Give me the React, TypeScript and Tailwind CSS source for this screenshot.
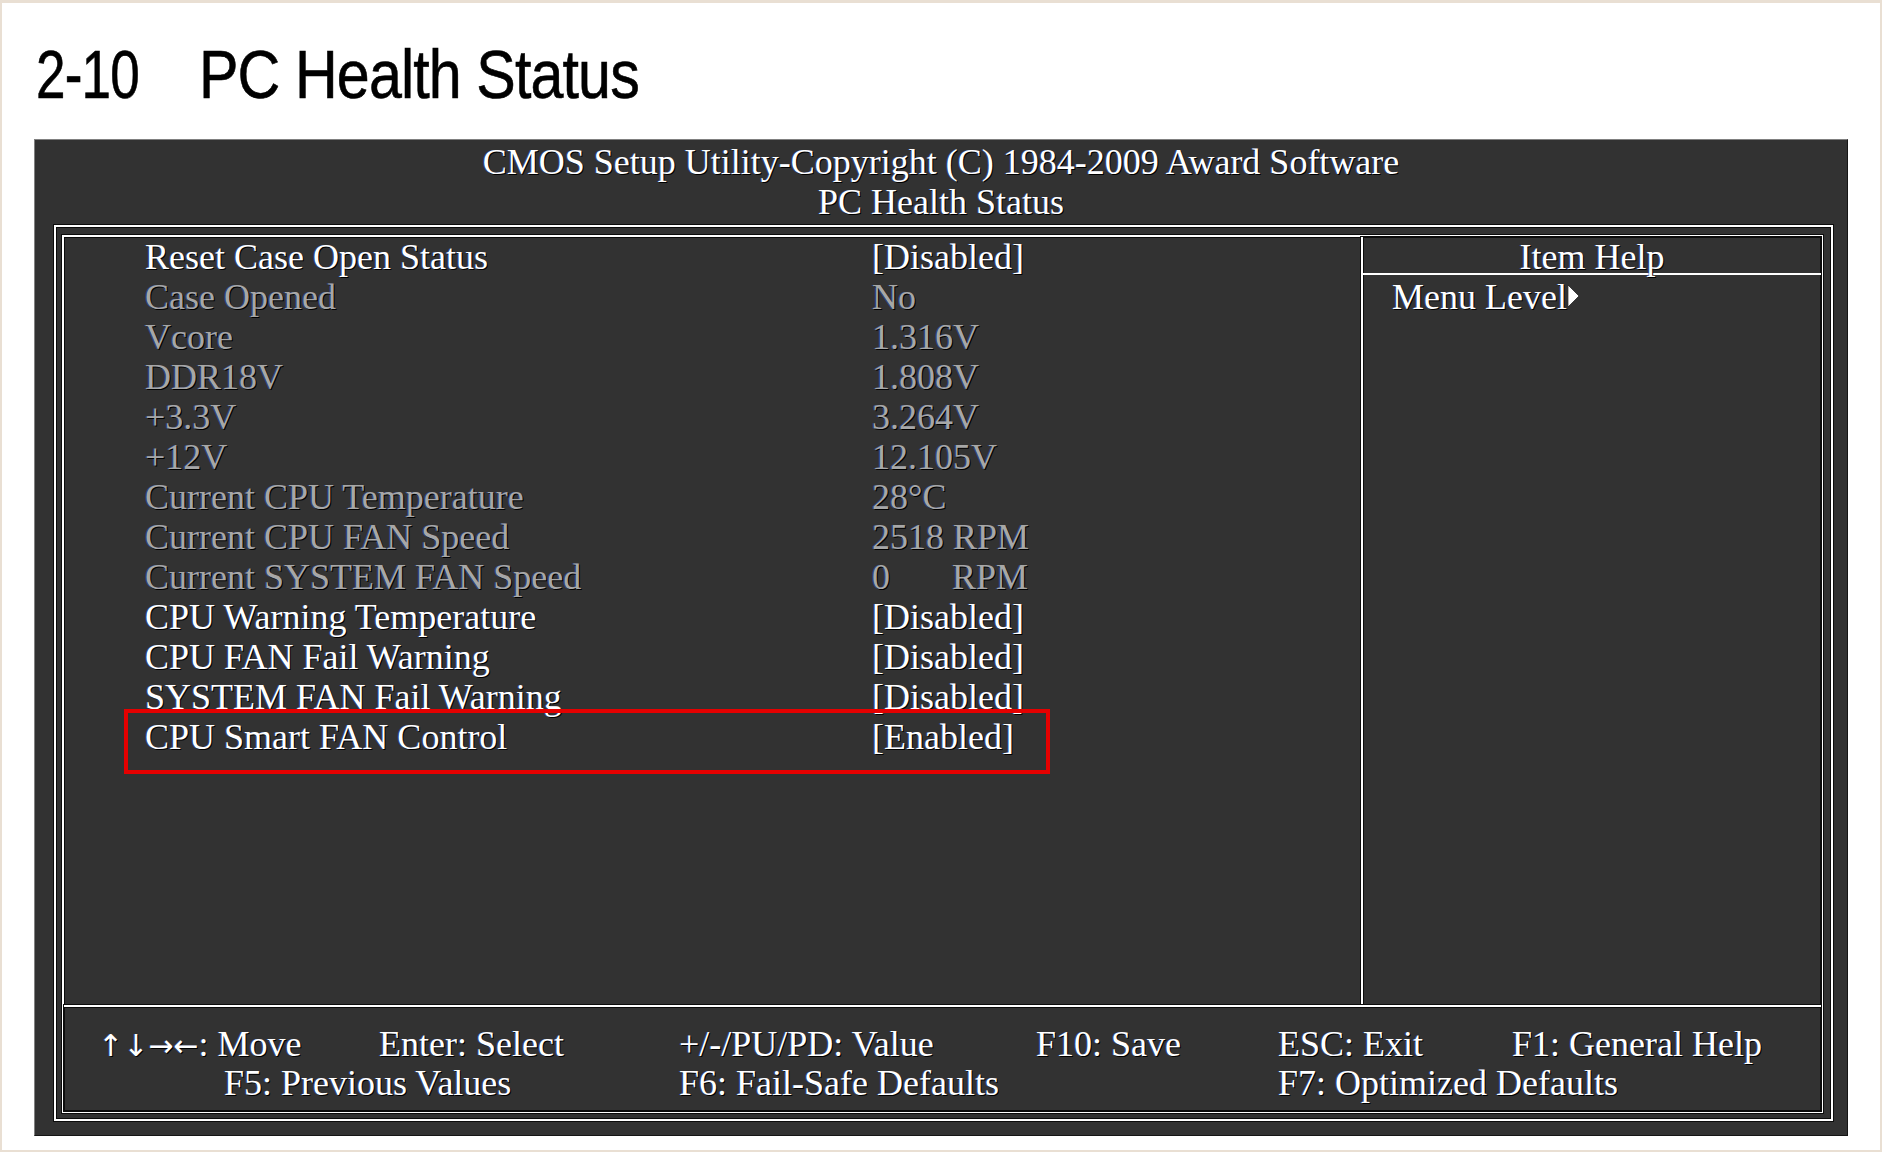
import React from "react";

const serif = "font-['Liberation_Serif','Times_New_Roman',serif]";
const sh = "[text-shadow:1px_1px_0_#000,-1px_0_0_rgba(40,80,200,0.55)]";

type Row = { label: string; value: React.ReactNode; active: boolean };

const rows: Row[] = [
  { label: "Reset Case Open Status", value: "[Disabled]", active: true },
  { label: "Case Opened", value: "No", active: false },
  { label: "Vcore", value: "1.316V", active: false },
  { label: "DDR18V", value: "1.808V", active: false },
  { label: "+3.3V", value: "3.264V", active: false },
  { label: "+12V", value: "12.105V", active: false },
  { label: "Current CPU Temperature", value: "28°C", active: false },
  { label: "Current CPU FAN Speed", value: "2518 RPM", active: false },
  {
    label: "Current SYSTEM FAN Speed",
    value: (
      <>
        <span className="inline-block w-[80px]">0</span>RPM
      </>
    ),
    active: false,
  },
  { label: "CPU Warning Temperature", value: "[Disabled]", active: true },
  { label: "CPU FAN Fail Warning", value: "[Disabled]", active: true },
  { label: "SYSTEM FAN Fail Warning", value: "[Disabled]", active: true },
  { label: "CPU Smart FAN Control", value: "[Enabled]", active: true },
];

const lineShadow = "shadow-[0_0_0_1px_#0c0c0c,inset_0_0_0_1px_#0c0c0c]";

export default function App() {
  return (
    <div className="w-[1882px] h-[1152px] bg-[#e9dfd3] pt-[3px] pl-[2px] pr-[2px] pb-[2px]">
      <div className="w-full h-full bg-white flex flex-col">
        {/* Title */}
        <div className="mt-[38px] ml-[34px] h-[67px] flex items-start font-['Liberation_Sans',Arial,sans-serif] text-[68px] leading-[67px] text-black [-webkit-text-stroke:0.6px_#000]">
          <div className="w-[163px] shrink-0">
            <span className="inline-block origin-left scale-x-[0.78] tracking-[-1px]">2-10</span>
          </div>
          <span className="inline-block origin-left scale-x-[0.87] tracking-[-1px] whitespace-nowrap">
            PC Health Status
          </span>
        </div>

        {/* BIOS panel */}
        <div
          className={`mt-[31px] ml-[32px] w-[1814px] h-[997px] bg-[#323232] border border-t-[#808080] border-l-[#808080] border-r-[#151515] border-b-[#151515] flex flex-col ${serif} text-white`}
        >
          <div className={`h-[85px] pt-[2px] flex flex-col items-center text-[36px] leading-[40px] ${sh}`}>
            <div>CMOS Setup Utility-Copyright (C) 1984-2009 Award Software</div>
            <div>PC Health Status</div>
          </div>

          {/* outer frame */}
          <div className={`ml-[19px] w-[1779px] h-[896px] border-2 border-white ${lineShadow} pt-[8px] pl-[6px] pr-[8px] pb-[6px]`}>
            {/* inner frame */}
            <div className={`w-full h-full border-2 border-white ${lineShadow} flex flex-col`}>
              {/* main */}
              <div className="h-[768px] flex">
                <div className="relative w-[1297px] shrink-0 pl-[81px] text-[36px] leading-[40px]">
                  {rows.map((r) => (
                    <div
                      key={r.label}
                      className={`h-[40px] flex whitespace-nowrap ${sh} ${r.active ? "text-white" : "text-[#a7a7a7]"}`}
                    >
                      <div className="w-[727px] shrink-0">{r.label}</div>
                      <div>{r.value}</div>
                    </div>
                  ))}
                  <div className="absolute left-[60px] top-[472px] w-[926px] h-[65px] border-[4px] border-[#e50000]" />
                </div>
                <div className={`flex-1 border-l-2 border-white ${lineShadow} flex flex-col text-[36px]`}>
                  <div className={`h-[38px] border-b-2 border-white leading-[40px] text-center ${sh}`}>Item Help</div>
                  <div className={`h-[42px] pt-[2px] leading-[40px] pl-[29px] flex items-center ${sh}`}>
                    <span>Menu Level</span>
                    <svg width="12" height="22" viewBox="0 0 12 22" className="ml-[1px] mt-[-2px]">
                      <path d="M0 0 L11 11 L0 22 Z" fill="#ffffff" stroke="#000" strokeWidth="0.6" />
                    </svg>
                  </div>
                </div>
              </div>

              {/* footer */}
              <div className={`flex-1 border-t-2 border-white ${lineShadow} pt-[18px] text-[36px] leading-[39px] whitespace-nowrap ${sh}`}>
                <div className="flex pl-[34px] h-[39px]">
                  <div className="w-[281px] shrink-0">
                    <span className="font-['DejaVu_Sans',sans-serif] text-[30px]">↑↓→←</span>: Move
                  </div>
                  <div className="w-[300px] shrink-0">Enter: Select</div>
                  <div className="w-[357px] shrink-0">+/-/PU/PD: Value</div>
                  <div className="w-[242px] shrink-0">F10: Save</div>
                  <div className="w-[234px] shrink-0">ESC: Exit</div>
                  <div>F1: General Help</div>
                </div>
                <div className="flex pl-[160px] h-[39px]">
                  <div className="w-[455px] shrink-0">F5: Previous Values</div>
                  <div className="w-[599px] shrink-0">F6: Fail-Safe Defaults</div>
                  <div>F7: Optimized Defaults</div>
                </div>
              </div>
            </div>
          </div>
        </div>
      </div>
    </div>
  );
}
